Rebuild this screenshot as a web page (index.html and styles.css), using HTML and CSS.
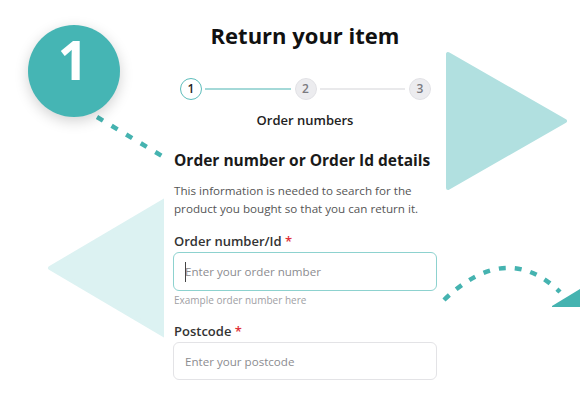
FILE: index.html
```html
<!DOCTYPE html>
<html lang="en">
<head>
<meta charset="utf-8">
<title>Return your item</title>
<link rel="stylesheet" href="styles.css">
</head>
<body>
<div class="stage">
  <svg class="deco deco-back" width="580" height="400" viewBox="0 0 580 400" aria-hidden="true">
    <polygon points="50,268 240,156 240,380" fill="#dcf2f2" stroke="#dcf2f2" stroke-width="4" stroke-linejoin="round"/>
  </svg>

  <div class="badge">1</div>

  <main class="card">
    <h1 class="title">Return your item</h1>
    <div class="stepper">
      <span class="step step-active">1</span>
      <span class="step-line step-line-done"></span>
      <span class="step">2</span>
      <span class="step-line"></span>
      <span class="step">3</span>
    </div>
    <p class="step-name">Order numbers</p>

    <h2 class="section-title">Order number or Order Id details</h2>
    <p class="intro">This information is needed to search for the product you bought so that you can return it.</p>

    <label class="label" for="order">Order number/Id <span class="req">*</span></label>
    <div class="field field-focus">
      <input id="order" class="input input-focus" type="text" placeholder="Enter your order number">
    </div>
    <p class="hint">Example order number here</p>

    <label class="label label-second" for="postcode">Postcode <span class="req">*</span></label>
    <div class="field">
      <input id="postcode" class="input" type="text" placeholder="Enter your postcode">
    </div>
  </main>

  <svg class="deco deco-front" width="580" height="400" viewBox="0 0 580 400" aria-hidden="true">
    <polygon points="448,54 448,188 565,121" fill="#b1e0e0" stroke="#b1e0e0" stroke-width="4" stroke-linejoin="round"/>
    <line x1="97" y1="117" x2="162" y2="156" stroke="#45b3b0" stroke-width="4.5" stroke-dasharray="7 10"/>
    <path d="M444 300 Q506.5 240 560 292" fill="none" stroke="#45b3b0" stroke-width="4.5" stroke-dasharray="7 9"/>
    <polygon points="552,306 580,289 580,307 552,307" fill="#45b3b0"/>
  </svg>
</div>
</body>
</html>
```

FILE: styles.css
```css
* { box-sizing: border-box; }

html, body {
  margin: 0;
  padding: 0;
  background: #ffffff;
}

body {
  font-family: "Open Sans", "Noto Sans", "DejaVu Sans", sans-serif;
  color: #1d1d1f;
}

.stage {
  position: relative;
  width: 580px;
  height: 400px;
  overflow: hidden;
  background: #ffffff;
}

.deco {
  position: absolute;
  left: 0;
  top: 0;
  pointer-events: none;
}

.deco-back { z-index: 0; }
.deco-front { z-index: 2; }

.badge {
  position: absolute;
  left: 28px;
  top: 25px;
  width: 92px;
  height: 92px;
  border-radius: 50%;
  background: #45b5b4;
  box-shadow: 0 4px 14px rgba(0, 0, 0, 0.18);
  color: #ffffff;
  font-size: 53px;
  font-weight: 700;
  line-height: 53px;
  padding-top: 8px;
  padding-right: 2px;
  text-align: center;
  z-index: 3;
}

.card {
  position: relative;
  z-index: 1;
  margin-left: 164px;
  width: 282px;
  height: 400px;
  padding: 20px 9px 0;
  background: #ffffff;
}

.title {
  margin: 0;
  font-size: 22px;
  line-height: 30px;
  font-weight: 700;
  text-align: center;
  color: #111111;
}

.stepper {
  display: flex;
  align-items: center;
  margin: 28px 6px 0 7px;
}

.step {
  flex: none;
  width: 22px;
  height: 22px;
  border-radius: 50%;
  background: #ececef;
  border: 1px solid #e2e2e6;
  color: #7a7a80;
  font-size: 12px;
  font-weight: 600;
  line-height: 20px;
  text-align: center;
}

.step-active {
  background: #ffffff;
  border-color: #5dbdbb;
  color: #222222;
}

.step-line {
  flex: 1;
  height: 2px;
  margin: 0 4px 0 3px;
  background: #e9e9eb;
}

.step-line-done {
  background: #a4d9d8;
}

.step-name {
  margin: 11px 0 0;
  font-size: 13px;
  line-height: 18px;
  font-weight: 600;
  text-align: center;
  color: #222222;
}

.section-title {
  margin: 21px 0 0 1px;
  font-size: 15.5px;
  line-height: 20px;
  font-weight: 700;
  white-space: nowrap;
  color: #1a1a1a;
}

.intro {
  margin: 12px 0 0 1px;
  font-size: 11.65px;
  line-height: 18px;
  color: #555555;
}

.label {
  display: block;
  margin: 14px 0 0 1px;
  font-size: 13px;
  line-height: 18px;
  font-weight: 600;
  color: #333333;
}

.label-second {
  margin-top: 15px;
}

.req {
  color: #e0313a;
}

.field {
  position: relative;
  margin-top: 2px;
}

.input {
  display: block;
  width: 100%;
  height: 38px;
  padding: 0 11px;
  border: 1px solid #e3e3e6;
  border-radius: 6px;
  background: #ffffff;
  font-family: "Open Sans", "Noto Sans", sans-serif;
  font-size: 11.6px;
  color: #333333;
  outline: none;
}

.input::placeholder {
  color: #8c8c90;
}

.input-focus {
  height: 39px;
  border-color: #8dd2cf;
}

.field-focus::after {
  content: "";
  position: absolute;
  left: 12px;
  top: 10px;
  width: 1px;
  height: 20px;
  background: #444444;
}

.hint {
  margin: 2px 0 0 1px;
  font-size: 10px;
  line-height: 14px;
  color: #a0a0a4;
}
```
